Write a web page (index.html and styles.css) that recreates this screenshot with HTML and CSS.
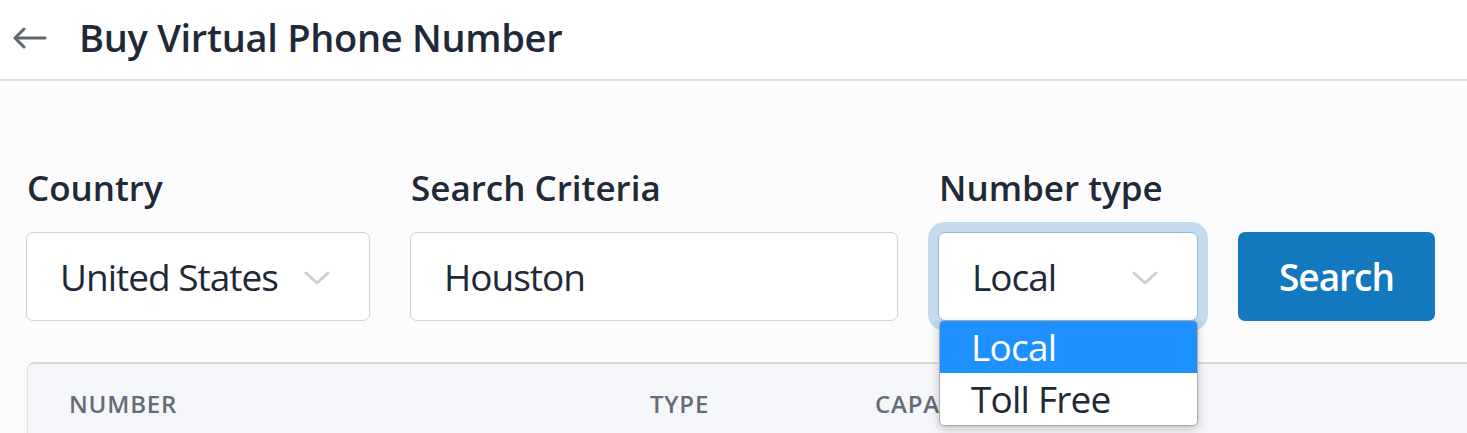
FILE: index.html
```html
<!DOCTYPE html>
<html lang="en">
<head>
<meta charset="utf-8">
<title>Buy Virtual Phone Number</title>
<link rel="stylesheet" href="styles.css">
</head>
<body>
<header class="topbar">
  <button class="back" aria-label="Back">
    <svg width="34" height="22" viewBox="0 0 34 22" fill="none" stroke="#5f6670" stroke-width="3" stroke-linecap="round" stroke-linejoin="round"><path d="M32 11H3"/><path d="M11 2L2 11l9 9"/></svg>
  </button>
  <h1 class="title">Buy Virtual Phone Number</h1>
</header>
<main class="content">
  <div class="filters">
    <div class="field field-country">
      <label class="label">Country</label>
      <div class="control select">
        <span class="value">United States</span>
        <svg class="chev" width="26" height="14" viewBox="0 0 26 14" fill="none" stroke="#cfcfd2" stroke-width="3" stroke-linecap="round" stroke-linejoin="round"><path d="M2 2l11 10L24 2"/></svg>
      </div>
    </div>
    <div class="field field-criteria">
      <label class="label">Search Criteria</label>
      <div class="control input"><span class="value">Houston</span></div>
    </div>
    <div class="field field-type">
      <label class="label">Number type</label>
      <div class="select-wrap">
        <div class="control select focused">
          <span class="value">Local</span>
          <svg class="chev" width="26" height="14" viewBox="0 0 26 14" fill="none" stroke="#cfcfd2" stroke-width="3" stroke-linecap="round" stroke-linejoin="round"><path d="M2 2l11 10L24 2"/></svg>
        </div>
        <ul class="dropdown">
          <li class="option selected">Local</li>
          <li class="option">Toll Free</li>
        </ul>
      </div>
    </div>
    <button class="search">Search</button>
  </div>
  <div class="table-card">
    <div class="thead">
      <span class="th">Number</span>
      <span class="th">Type</span>
      <span class="th">Capabilities</span>
    </div>
  </div>
</main>
</body>
</html>
```

FILE: styles.css
```css
* { box-sizing: border-box; }
html, body { margin: 0; padding: 0; }
body {
  background: #fcfcfc;
  font-family: "Open Sans", "Noto Sans", sans-serif;
  color: #1f2937;
  overflow: hidden;
  width: 1467px;
  height: 433px;
}
.topbar {
  height: 81px;
  background: #ffffff;
  border-bottom: 2px solid #e0e0e0;
  display: flex;
  align-items: center;
  padding-left: 13px;
}
.back {
  border: 0;
  background: none;
  padding: 0;
  margin: 0;
  width: 34px;
  height: 22px;
  display: flex;
  margin-top: -4px;
}
.title {
  margin: 0 0 0 32px;
  font-size: 38px;
  font-weight: 600;
  line-height: 1;
  letter-spacing: -0.3px;
  margin-top: -6px;
}
.content {
  padding: 83px 0 0 26px;
}
.filters {
  display: flex;
  align-items: flex-end;
  gap: 40px;
}
.field {
  display: flex;
  flex-direction: column;
}
.label {
  font-size: 35px;
  font-weight: 600;
  line-height: 48px;
  height: 48px;
  margin-bottom: 20px;
  padding-left: 1px;
  letter-spacing: 0;
}
.control {
  height: 89px;
  background: #ffffff;
  border: 1.5px solid #d2d2d6;
  border-radius: 7px;
  display: flex;
  align-items: center;
  padding-left: 33px;
  font-size: 37px;
  letter-spacing: -1px;
}
.field-country .control { width: 344px; }
.field-criteria .control { width: 488px; }
.field-type .control { width: 260px; }
.select { justify-content: space-between; padding-right: 39px; }
.chev { flex: none; margin-top: 2px; }
.focused {
  border-color: #8fbbdd;
  box-shadow: 0 0 0 10px #c3dbed;
}
.select-wrap { position: relative; }
.dropdown {
  position: absolute;
  top: 88px;
  left: 1px;
  width: 259px;
  margin: 0;
  padding: 0;
  list-style: none;
  background: #ffffff;
  border: 1px solid #a9a9a9;
  border-radius: 5px;
  overflow: hidden;
  box-shadow: 0 3px 10px rgba(0, 0, 0, 0.22);
  z-index: 5;
}
.option {
  height: 52px;
  line-height: 52px;
  padding-left: 31px;
  font-size: 37px;
  letter-spacing: -0.8px;
  color: #1f2937;
}
.option.selected {
  background: #1e90ff;
  color: #ffffff;
}
.search {
  width: 197px;
  height: 89px;
  background: #1378be;
  color: #ffffff;
  border: 0;
  border-radius: 7px;
  font-family: inherit;
  font-size: 37px;
  font-weight: 600;
  letter-spacing: -1px;
  padding: 0;
}
.table-card {
  margin-top: 41px;
  margin-left: 1px;
  background: #f5f6f9;
  border-top: 2px solid #dcdcdc;
  border-left: 1px solid #e2e2e2;
  border-top-left-radius: 7px;
  height: 80px;
}
.thead {
  display: grid;
  grid-template-columns: 581px 225px 1fr;
  padding-left: 41px;
  height: 78px;
  align-items: center;
}
.th {
  text-transform: uppercase;
  font-size: 24px;
  font-weight: 600;
  color: #646c78;
  letter-spacing: 0.8px;
  white-space: nowrap;
}
```
